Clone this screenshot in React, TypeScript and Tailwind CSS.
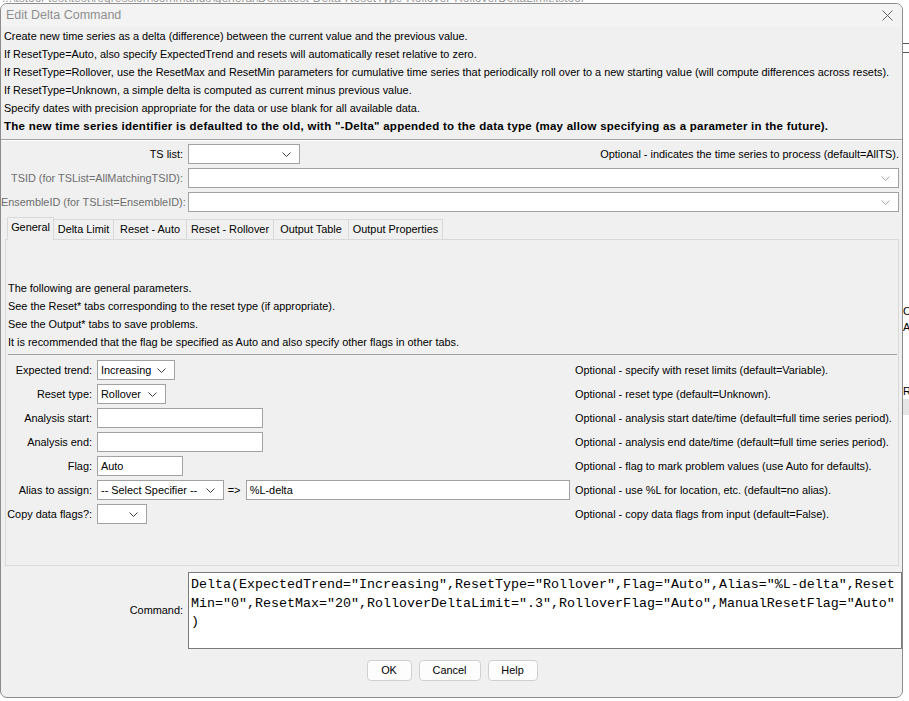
import React from "react";

const ui = "font-['Liberation_Sans',Arial,sans-serif]";

function Chevron({ light = false }: { light?: boolean }) {
  return (
    <svg width="9" height="5" viewBox="0 0 9 5" className="shrink-0">
      <polyline
        points="0.5,0.5 4.5,4.5 8.5,0.5"
        fill="none"
        stroke={light ? "#a8a8a8" : "#404040"}
        strokeWidth="1"
      />
    </svg>
  );
}

function Combo({
  width,
  value = "",
  light = false,
  grow = false,
}: {
  width?: string;
  value?: string;
  light?: boolean;
  grow?: boolean;
}) {
  return (
    <div
      className={`h-[20px] bg-white border border-[#a2a2a2] flex items-center pl-[3px] pr-[8px] ${
        grow ? "flex-1" : ""
      } ${width ?? ""}`}
    >
      <span className="flex-1 whitespace-nowrap overflow-hidden">{value}</span>
      <Chevron light={light} />
    </div>
  );
}

function Field({ width, value = "" }: { width: string; value?: string }) {
  return (
    <div
      className={`h-[20px] bg-white border border-[#a2a2a2] flex items-center pl-[3px] whitespace-nowrap overflow-hidden ${width}`}
    >
      {value}
    </div>
  );
}

function Tab({ label, width, active = false }: { label: string; width: string; active?: boolean }) {
  if (active) {
    return (
      <div
        className={`${width} h-[23px] -mb-[1px] bg-[#f0f0f0] border border-b-0 border-[#d9d9d9] flex items-center justify-center pb-[4px] relative z-10`}
      >
        {label}
      </div>
    );
  }
  return (
    <div
      className={`${width} h-[20px] bg-[#f0f0f0] border border-l-0 border-b-0 border-[#d9d9d9] flex items-center justify-center`}
    >
      {label}
    </div>
  );
}

function FormRow({
  label,
  desc,
  children,
}: {
  label: string;
  desc: string;
  children: React.ReactNode;
}) {
  return (
    <>
      <div className="h-[20px] flex items-center justify-end whitespace-nowrap">{label}</div>
      <div className="h-[20px] flex items-center">{children}</div>
      <div className="h-[20px] flex items-center whitespace-nowrap">{desc}</div>
    </>
  );
}

function Button({ label, width }: { label: string; width: string }) {
  return (
    <div
      className={`${width} h-[21px] bg-[#fdfdfd] border border-[#d0d0d0] rounded-[4px] flex items-center justify-center`}
    >
      {label}
    </div>
  );
}

export default function App() {
  const commandLines = [
    'Delta(ExpectedTrend="Increasing",ResetType="Rollover",Flag="Auto",Alias="%L-delta",Reset',
    'Min="0",ResetMax="20",RolloverDeltaLimit=".3",RolloverFlag="Auto",ManualResetFlag="Auto"',
    ")",
  ];

  return (
    <div className={`w-[909px] h-[701px] bg-white overflow-hidden text-[10.9px] text-black ${ui}`}>
      {/* window behind the dialog: a sliver of its path text at the top */}
      <div className="h-[3px] overflow-hidden text-[#9a9a9a] text-[12px] leading-[12px] whitespace-nowrap">
        <div className="-mt-[8px] pl-[2px]">
          ...\tstool-test\test\regression\commands\general\Delta\test-Delta-ResetType-Rollover-RolloverDeltaLimit.tstool
        </div>
      </div>

      <div className="flex">
        {/* dialog window */}
        <div className="w-[903px] h-[695px] shrink-0 bg-[#f0f0f0] border border-[#8c8c8c] rounded-[7px] flex flex-col overflow-hidden">
          {/* title bar */}
          <div className="h-[23px] shrink-0 flex items-center pl-[5px] pr-[9px] bg-[#f3f3f3]">
            <span className="flex-1 text-[12.5px] text-[#8f8f8f]">Edit Delta Command</span>
            <svg width="11" height="11" viewBox="0 0 11 11">
              <line x1="0.5" y1="0.5" x2="10.5" y2="10.5" stroke="#666" strokeWidth="1" />
              <line x1="10.5" y1="0.5" x2="0.5" y2="10.5" stroke="#666" strokeWidth="1" />
            </svg>
          </div>

          {/* description */}
          <div className="pl-[3px] leading-[18px] whitespace-nowrap">
            <div>Create new time series as a delta (difference) between the current value and the previous value.</div>
            <div>If ResetType=Auto, also specify ExpectedTrend and resets will automatically reset relative to zero.</div>
            <div>
              If ResetType=Rollover, use the ResetMax and ResetMin parameters for cumulative time series that periodically
              roll over to a new starting value (will compute differences across resets).
            </div>
            <div>If ResetType=Unknown, a simple delta is computed as current minus previous value.</div>
            <div>Specify dates with precision appropriate for the data or use blank for all available data.</div>
            <div className="font-bold text-[11.5px] tracking-[0.25px]">
              The new time series identifier is defaulted to the old, with "-Delta" appended to the data type (may allow
              specifying as a parameter in the future).
            </div>
          </div>

          <div className="mt-[4px] h-[1px] bg-[#a0a0a0]" />
          <div className="h-[1px] bg-white" />

          {/* time series selection */}
          <div className="mt-[3px] flex flex-col gap-[4px] pr-[3px]">
            <div className="flex items-center gap-[5px]">
              <div className="w-[182px] text-right">TS list:</div>
              <Combo width="w-[112px]" />
              <div className="flex-1 text-right">Optional - indicates the time series to process (default=AllTS).</div>
            </div>
            <div className="flex items-center gap-[5px]">
              <div className="w-[182px] text-right text-[#6e6e6e] whitespace-nowrap">TSID (for TSList=AllMatchingTSID):</div>
              <Combo grow light />
            </div>
            <div className="flex items-center gap-[5px]">
              <div className="w-[182px] text-right text-[#6e6e6e] whitespace-nowrap">EnsembleID (for TSList=EnsembleID):</div>
              <Combo grow light />
            </div>
          </div>

          {/* tabbed parameters */}
          <div className="mt-[5px] ml-[4px] w-[894px] flex flex-col">
            <div className="flex items-end pl-[2px] h-[22px]">
              <Tab label="General" width="w-[47px]" active />
              <Tab label="Delta Limit" width="w-[60px]" />
              <Tab label="Reset - Auto" width="w-[73px]" />
              <Tab label="Reset - Rollover" width="w-[87px]" />
              <Tab label="Output Table" width="w-[75px]" />
              <Tab label="Output Properties" width="w-[94px]" />
            </div>
            <div className="h-[327px] border border-[#d9d9d9] bg-[#f0f0f0] pt-[39px] pl-[2px] pr-[1px]">
              <div className="leading-[18px] whitespace-nowrap">
                <div>The following are general parameters.</div>
                <div>See the Reset* tabs corresponding to the reset type (if appropriate).</div>
                <div>See the Output* tabs to save problems.</div>
                <div>It is recommended that the flag be specified as Auto and also specify other flags in other tabs.</div>
              </div>
              <div className="mt-[3px] h-[1px] bg-[#a0a0a0]" />
              <div className="mt-[5px] -ml-[2px] grid grid-cols-[86px_473px_1fr] gap-x-[5px] gap-y-[4px]">
                <FormRow label="Expected trend:" desc="Optional - specify with reset limits (default=Variable).">
                  <Combo width="w-[78px]" value="Increasing" />
                </FormRow>
                <FormRow label="Reset type:" desc="Optional - reset type (default=Unknown).">
                  <Combo width="w-[69px]" value="Rollover" />
                </FormRow>
                <FormRow
                  label="Analysis start:"
                  desc="Optional - analysis start date/time (default=full time series period)."
                >
                  <Field width="w-[166px]" />
                </FormRow>
                <FormRow label="Analysis end:" desc="Optional - analysis end date/time (default=full time series period).">
                  <Field width="w-[166px]" />
                </FormRow>
                <FormRow label="Flag:" desc="Optional - flag to mark problem values (use Auto for defaults).">
                  <Field width="w-[86px]" value="Auto" />
                </FormRow>
                <FormRow label="Alias to assign:" desc="Optional - use %L for location, etc. (default=no alias).">
                  <Combo width="w-[127px]" value="-- Select Specifier --" />
                  <span className="ml-[4px] w-[18px]">=&gt;</span>
                  <Field width="w-[325px]" value="%L-delta" />
                </FormRow>
                <FormRow label="Copy data flags?:" desc="Optional - copy data flags from input (default=False).">
                  <Combo width="w-[50px]" />
                </FormRow>
              </div>
            </div>
          </div>

          {/* command text */}
          <div className="mt-[6px] flex items-center gap-[5px]">
            <div className="w-[182px] text-right">Command:</div>
            <div className="w-[714px] h-[77px] bg-white border border-[#7a7a7a] pt-[3px] pl-[2px] font-['Liberation_Mono','Courier_New',monospace] text-[13.33px] leading-[18.5px] whitespace-pre overflow-hidden">
              {commandLines.map((l) => (
                <div key={l}>{l}</div>
              ))}
            </div>
          </div>

          {/* buttons */}
          <div className="mt-[11px] flex justify-center gap-[7px] pl-[1px]">
            <Button label="OK" width="w-[45px]" />
            <Button label="Cancel" width="w-[62px]" />
            <Button label="Help" width="w-[50px]" />
          </div>
        </div>

        {/* edge of the application window behind */}
        <div className="flex-1 h-[698px] -mt-[3px] bg-white flex flex-col text-[11px] leading-[16px] overflow-hidden">
          <div className="h-[43px]" />
          <div className="h-[1px] bg-[#555]" />
          <div className="h-[8px]" />
          <div className="h-[1px] bg-[#555]" />
          <div className="h-[250px]" />
          <div className="pl-[0px]">O</div>
          <div>A</div>
          <div className="h-[48px]" />
          <div>R</div>
          <div className="h-[16px] bg-[#e6e6e6]" />
        </div>
      </div>
    </div>
  );
}
